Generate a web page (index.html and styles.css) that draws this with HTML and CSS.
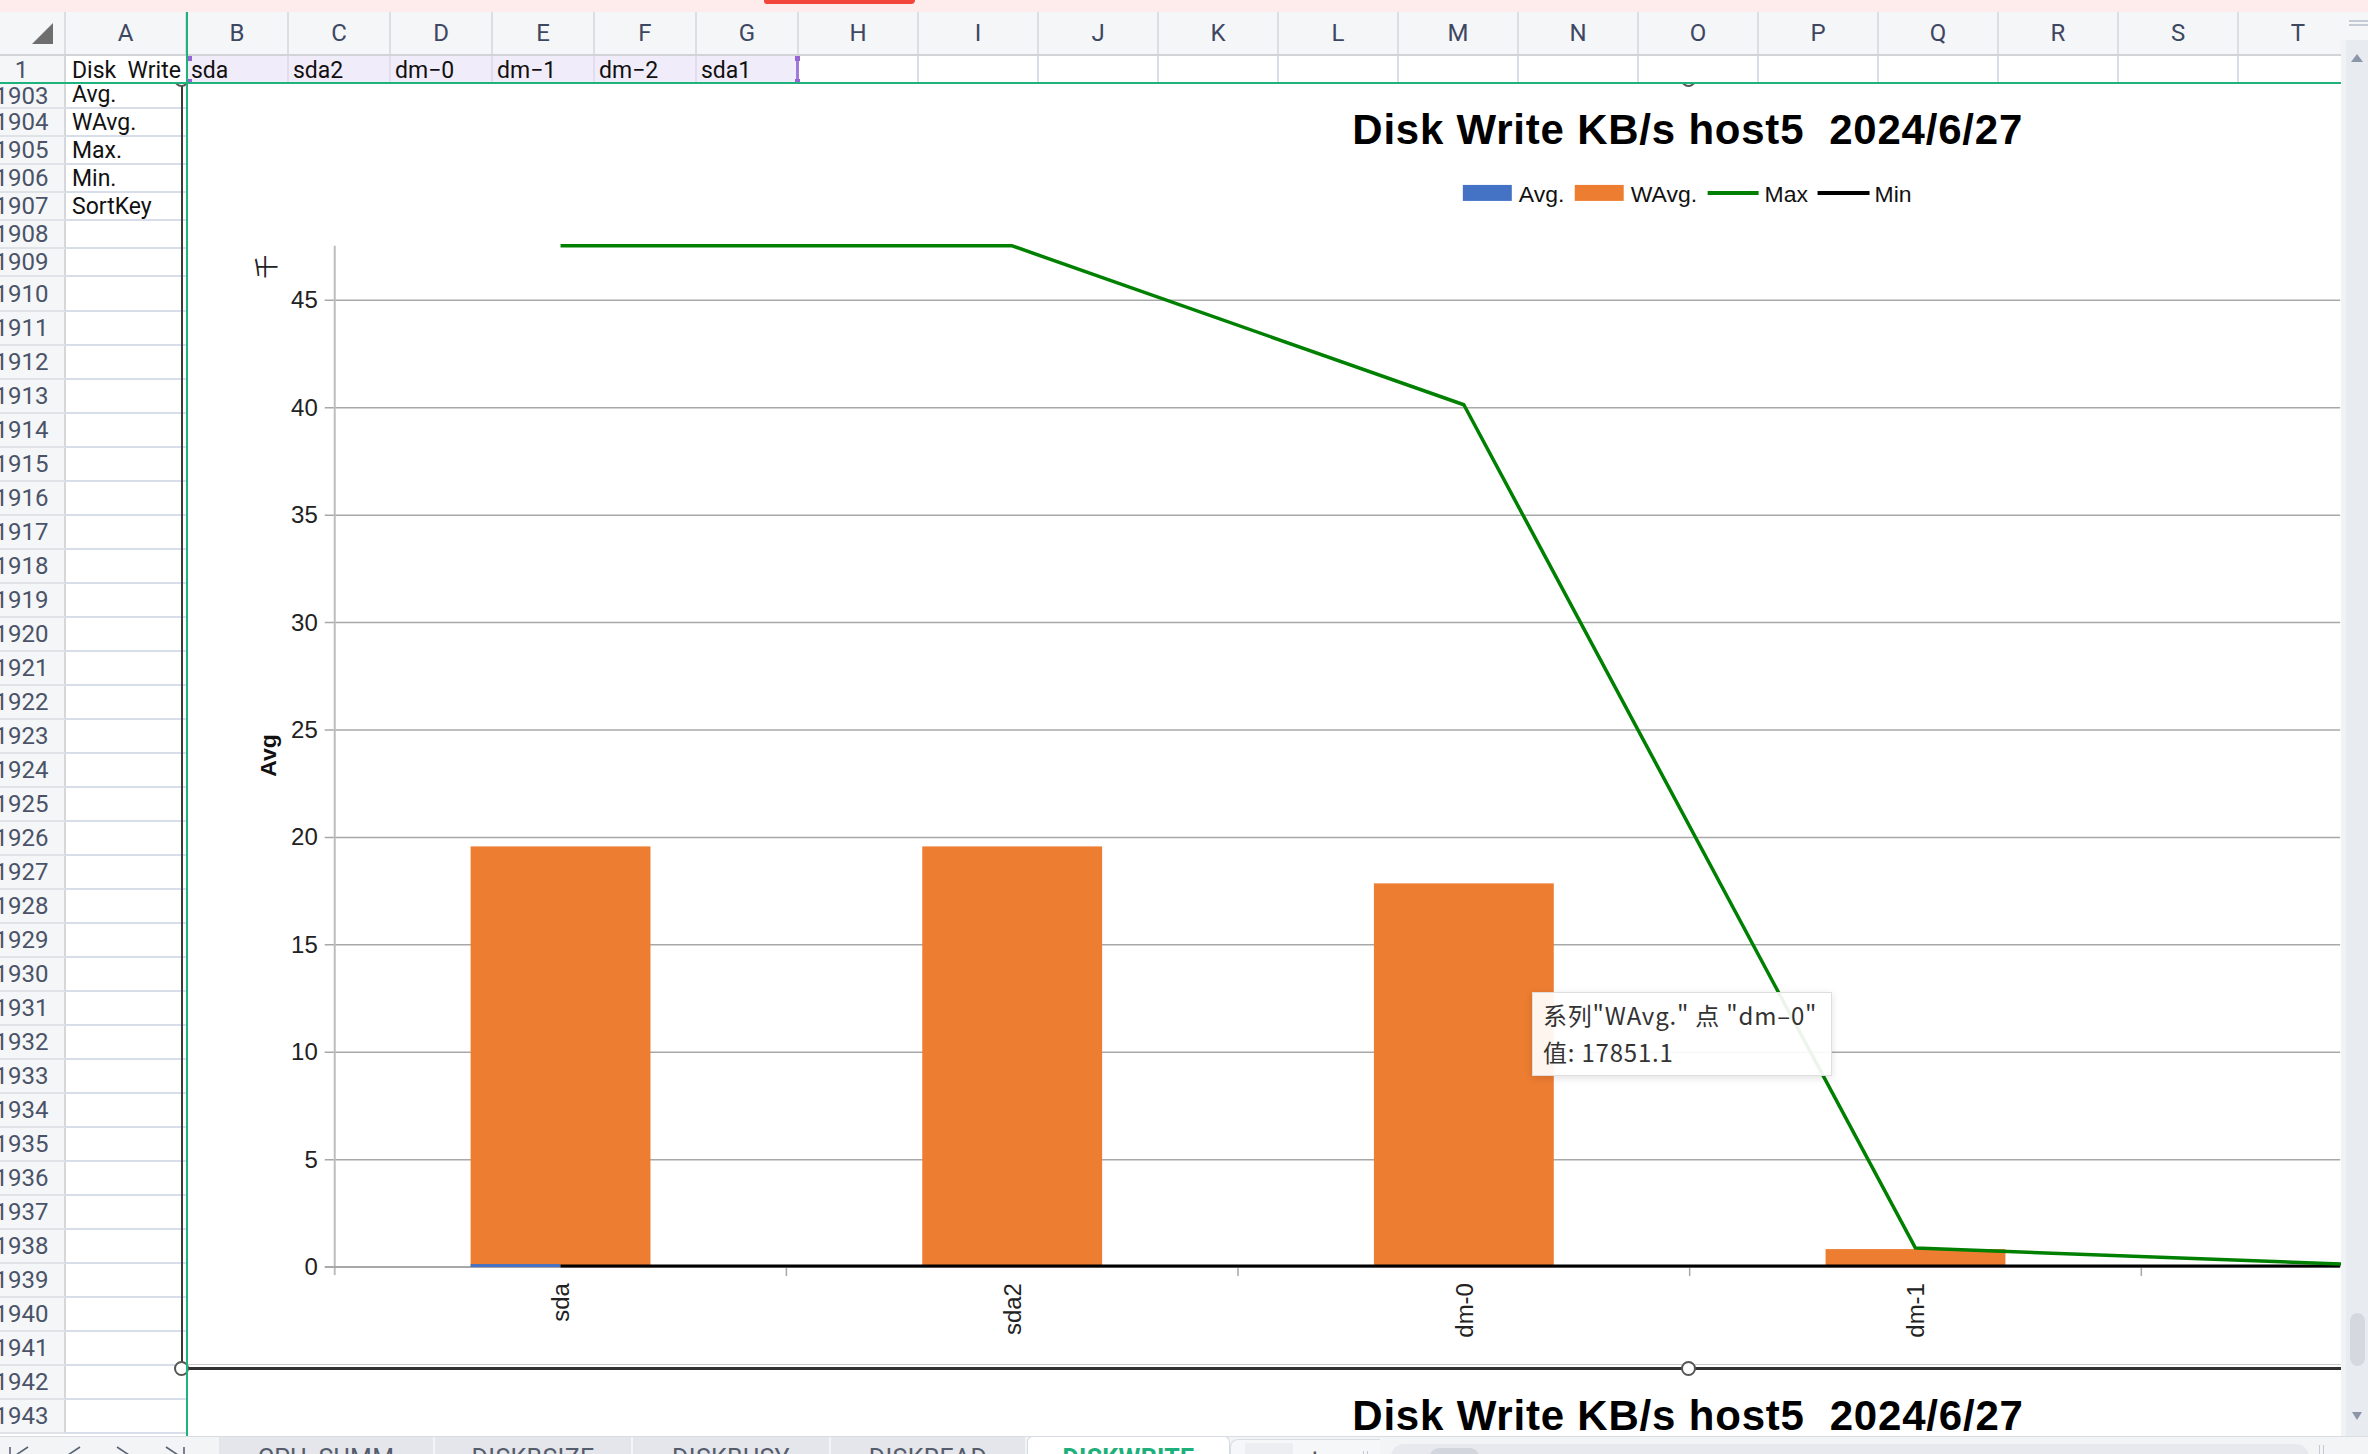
FILE: index.html
```html
<!DOCTYPE html>
<html lang="zh">
<head>
<meta charset="utf-8">
<title>DISKWRITE</title>
<link rel="stylesheet" href="styles.css">
</head>
<body>
<div class="app">
  <div class="topbar"><div class="mark"></div></div>
  <div class="main">
    <div class="sheet">
      <div class="cols">
        <div class="corner"><svg width="22" height="22" viewBox="0 0 22 22"><polygon points="21,0 21,21 0,21" fill="#6e6e6e"/></svg></div>
        <div>A</div><div>B</div><div>C</div><div>D</div><div>E</div><div>F</div><div>G</div>
        <div>H</div><div>I</div><div>J</div><div>K</div><div>L</div><div>M</div><div>N</div>
        <div>O</div><div>P</div><div>Q</div><div>R</div><div>S</div><div>T</div>
      </div>
      <div class="row1">
        <div class="rh1">1</div>
        <div class="c a1">Disk  Write</div>
        <div class="c sel sel-first">sda</div>
        <div class="c sel">sda2</div>
        <div class="c sel">dm−0</div>
        <div class="c sel">dm−1</div>
        <div class="c sel">dm−2</div>
        <div class="c sel sel-last">sda1</div>
        <div class="c"></div><div class="c"></div><div class="c"></div><div class="c"></div><div class="c"></div>
        <div class="c"></div><div class="c"></div><div class="c"></div><div class="c"></div><div class="c"></div>
        <div class="c"></div><div class="c"></div><div class="c"></div>
      </div>
      <div class="pane">
        <div class="left">
          <div class="lrow h25"><div class="rh"><span>1903</span></div><div class="ca">Avg.</div></div>
          <div class="lrow h28"><div class="rh"><span>1904</span></div><div class="ca">WAvg.</div></div>
          <div class="lrow h28"><div class="rh"><span>1905</span></div><div class="ca">Max.</div></div>
          <div class="lrow h28"><div class="rh"><span>1906</span></div><div class="ca">Min.</div></div>
          <div class="lrow h28"><div class="rh"><span>1907</span></div><div class="ca">SortKey</div></div>
          <div class="lrow h28"><div class="rh"><span>1908</span></div><div class="ca"></div></div>
          <div class="lrow h28"><div class="rh"><span>1909</span></div><div class="ca"></div></div>
          <div class="lrow h35"><div class="rh"><span>1910</span></div><div class="ca"></div></div>
          <div class="lrow"><div class="rh"><span>1911</span></div><div class="ca"></div></div>
          <div class="lrow"><div class="rh"><span>1912</span></div><div class="ca"></div></div>
          <div class="lrow"><div class="rh"><span>1913</span></div><div class="ca"></div></div>
          <div class="lrow"><div class="rh"><span>1914</span></div><div class="ca"></div></div>
          <div class="lrow"><div class="rh"><span>1915</span></div><div class="ca"></div></div>
          <div class="lrow"><div class="rh"><span>1916</span></div><div class="ca"></div></div>
          <div class="lrow"><div class="rh"><span>1917</span></div><div class="ca"></div></div>
          <div class="lrow"><div class="rh"><span>1918</span></div><div class="ca"></div></div>
          <div class="lrow"><div class="rh"><span>1919</span></div><div class="ca"></div></div>
          <div class="lrow"><div class="rh"><span>1920</span></div><div class="ca"></div></div>
          <div class="lrow"><div class="rh"><span>1921</span></div><div class="ca"></div></div>
          <div class="lrow"><div class="rh"><span>1922</span></div><div class="ca"></div></div>
          <div class="lrow"><div class="rh"><span>1923</span></div><div class="ca"></div></div>
          <div class="lrow"><div class="rh"><span>1924</span></div><div class="ca"></div></div>
          <div class="lrow"><div class="rh"><span>1925</span></div><div class="ca"></div></div>
          <div class="lrow"><div class="rh"><span>1926</span></div><div class="ca"></div></div>
          <div class="lrow"><div class="rh"><span>1927</span></div><div class="ca"></div></div>
          <div class="lrow"><div class="rh"><span>1928</span></div><div class="ca"></div></div>
          <div class="lrow"><div class="rh"><span>1929</span></div><div class="ca"></div></div>
          <div class="lrow"><div class="rh"><span>1930</span></div><div class="ca"></div></div>
          <div class="lrow"><div class="rh"><span>1931</span></div><div class="ca"></div></div>
          <div class="lrow"><div class="rh"><span>1932</span></div><div class="ca"></div></div>
          <div class="lrow"><div class="rh"><span>1933</span></div><div class="ca"></div></div>
          <div class="lrow"><div class="rh"><span>1934</span></div><div class="ca"></div></div>
          <div class="lrow"><div class="rh"><span>1935</span></div><div class="ca"></div></div>
          <div class="lrow"><div class="rh"><span>1936</span></div><div class="ca"></div></div>
          <div class="lrow"><div class="rh"><span>1937</span></div><div class="ca"></div></div>
          <div class="lrow"><div class="rh"><span>1938</span></div><div class="ca"></div></div>
          <div class="lrow"><div class="rh"><span>1939</span></div><div class="ca"></div></div>
          <div class="lrow"><div class="rh"><span>1940</span></div><div class="ca"></div></div>
          <div class="lrow"><div class="rh"><span>1941</span></div><div class="ca"></div></div>
          <div class="lrow"><div class="rh"><span>1942</span></div><div class="ca"></div></div>
          <div class="lrow"><div class="rh"><span>1943</span></div><div class="ca"></div></div>
        </div>
        <div class="charts">
          <svg class="chart1" width="2153" height="1285" viewBox="188 80 2153 1285">
            <text class="ct-title" x="1688" y="144" text-anchor="middle">Disk Write KB/s host5  2024/6/27</text>
            <rect x="1463" y="185" width="49" height="16" fill="#4472c4"/>
            <text class="ct-leg" x="1519" y="202">Avg.</text>
            <rect x="1575" y="185" width="49" height="16" fill="#ed7d31"/>
            <text class="ct-leg" x="1631" y="202">WAvg.</text>
            <line x1="1708" y1="193" x2="1759" y2="193" stroke="#008000" stroke-width="4"/>
            <text class="ct-leg" x="1765" y="202">Max</text>
            <line x1="1818" y1="193" x2="1870" y2="193" stroke="#000" stroke-width="4"/>
            <text class="ct-leg" x="1875" y="202">Min</text>

            <g stroke="#a8a8a8" stroke-width="1.5">
              <line x1="324" y1="1160.5" x2="2341" y2="1160.5"/>
              <line x1="324" y1="1053" x2="2341" y2="1053"/>
              <line x1="324" y1="945.5" x2="2341" y2="945.5"/>
              <line x1="324" y1="838" x2="2341" y2="838"/>
              <line x1="324" y1="730.5" x2="2341" y2="730.5"/>
              <line x1="324" y1="623" x2="2341" y2="623"/>
              <line x1="324" y1="515.5" x2="2341" y2="515.5"/>
              <line x1="324" y1="408" x2="2341" y2="408"/>
              <line x1="324" y1="300.5" x2="2341" y2="300.5"/>
            </g>
            <line x1="334" y1="246" x2="334" y2="1276" stroke="#bdbdbd" stroke-width="2"/>
            <line x1="324" y1="1268" x2="2341" y2="1268" stroke="#a8a8a8" stroke-width="2"/>
            <g stroke="#a8a8a8" stroke-width="1.5">
              <line x1="786" y1="1268" x2="786" y2="1277"/>
              <line x1="1238" y1="1268" x2="1238" y2="1277"/>
              <line x1="1690" y1="1268" x2="1690" y2="1277"/>
              <line x1="2142" y1="1268" x2="2142" y2="1277"/>
            </g>
            <g class="ct-axis" text-anchor="end">
              <text x="317" y="1276">0</text>
              <text x="317" y="1168.5">5</text>
              <text x="317" y="1061">10</text>
              <text x="317" y="953.5">15</text>
              <text x="317" y="846">20</text>
              <text x="317" y="738.5">25</text>
              <text x="317" y="631">30</text>
              <text x="317" y="523.5">35</text>
              <text x="317" y="416">40</text>
              <text x="317" y="308.5">45</text>
            </g>
            <text class="ct-unit" x="274" y="267" text-anchor="middle" transform="rotate(-90 274 267)">千</text>
            <text class="ct-ytitle" x="275" y="756" text-anchor="middle" transform="rotate(-90 275 756)">Avg</text>

            <rect x="470" y="847" width="180" height="421" fill="#ed7d31"/>
            <rect x="922" y="847" width="180" height="421" fill="#ed7d31"/>
            <rect x="1374" y="884" width="180" height="384" fill="#ed7d31"/>
            <rect x="1826" y="1250" width="180" height="18" fill="#ed7d31"/>
            <rect x="470" y="1265" width="90" height="3" fill="#4472c4"/>

            <line x1="560" y1="1267" x2="2341" y2="1267" stroke="#000" stroke-width="3"/>
            <polyline points="560,246 1012,246 1464,405 1916,1249 2368,1266" fill="none" stroke="#008000" stroke-width="3.5" stroke-linejoin="round"/>

            <g class="ct-axis" text-anchor="end">
              <text x="568" y="1284" transform="rotate(-90 568 1284)">sda</text>
              <text x="1021" y="1284" transform="rotate(-90 1021 1284)">sda2</text>
              <text x="1473" y="1284" transform="rotate(-90 1473 1284)">dm-0</text>
              <text x="1925" y="1284" transform="rotate(-90 1925 1284)">dm-1</text>
            </g>
          </svg>
          <svg class="chart2" width="2153" height="80" viewBox="188 1368 2153 80">
            <text class="ct-title" x="1688" y="1430" text-anchor="middle">Disk Write KB/s host5  2024/6/27</text>
          </svg>
        </div>

        <div class="frame">
          <span class="hd tl"></span><span class="hd tm"></span>
          <span class="hd bl"></span><span class="hd bm"></span>
        </div>

        <div class="tooltip"><div class="tt-line">系列"WAvg." 点 "dm–0"</div><div class="tt-line">值: 17851.1</div></div>
      </div>
    </div>
    <div class="scrollbar">
      <div class="sb-top">
        <svg width="19" height="6" viewBox="0 0 19 6"><line x1="0" y1="1" x2="19" y2="1" stroke="#b9c0cc" stroke-width="1.6"/><line x1="0" y1="5" x2="19" y2="5" stroke="#b9c0cc" stroke-width="1.6"/></svg>
      </div>
      <div class="sb-track">
        <svg class="sb-arrow" width="12" height="8" viewBox="0 0 12 8"><polygon points="6,0 12,8 0,8" fill="#8c96a9"/></svg>
        <div class="sb-space"></div>
        <div class="sb-thumb"></div>
        <svg class="sb-arrow" width="10" height="8" viewBox="0 0 10 8"><polygon points="0,0 10,0 5,8" fill="#8c96a9"/></svg>
      </div>
    </div>
  </div>
  <div class="hdivider"></div>
  <div class="vdivider"></div>
  <div class="tabbar">
    <div class="nav">
      <svg width="219" height="18" viewBox="0 0 219 18">
        <g stroke="#5a6275" stroke-width="1.6" fill="none">
          <line x1="10" y1="10" x2="10" y2="26"/>
          <polyline points="28,10 16,18 28,26"/>
          <polyline points="80,10 68,18 80,26"/>
          <polyline points="117,10 129,18 117,26"/>
          <polyline points="166,10 178,18 166,26"/>
          <line x1="184" y1="10" x2="184" y2="26"/>
        </g>
      </svg>
    </div>
    <div class="tab w214">CPU_SUMM</div>
    <div class="tab w198">DISKBSIZE</div>
    <div class="tab w198">DISKBUSY</div>
    <div class="tab w196">DISKREAD</div>
    <div class="tab active">DISKWRITE</div>
    <div class="tab-extra">
      <div class="tx-sq"></div>
      <div class="tx-plus">+</div>
      <div class="tx-bars"></div>
    </div>
    <div class="htrack"><div class="hthumb"></div></div>
    <div class="tx-bars end"></div>
  </div>
</div>
</body>
</html>
```

FILE: styles.css
```css
* { box-sizing: border-box; margin: 0; padding: 0; }
html, body { width: 2368px; height: 1454px; overflow: hidden; background: #fff; }
body { font-family: Roboto, "Noto Sans", sans-serif; color: #111; }

.app { position: relative; width: 2368px; height: 1454px; display: flex; flex-direction: column; }

.topbar { position: relative; height: 12px; flex: none; background: #fdeceb; }
.topbar .mark { position: absolute; left: 764px; top: 0; width: 151px; height: 4px; background: #f2453b; border-radius: 0 0 5px 3px; }

.main { display: flex; flex: 1; min-height: 0; }
.sheet { width: 2341px; flex: none; display: flex; flex-direction: column; overflow: hidden; }

.cols, .row1 {
  display: grid;
  grid-template-columns: 66px 121px repeat(6, 102px) repeat(13, 120px);
  flex: none;
}
.cols { height: 44px; background: #f5f6f8; border-bottom: 2px solid #d1d3d7; }
.cols > div {
  display: flex; align-items: center; justify-content: center;
  border-right: 2px solid #dcdee2;
  font-size: 24px; color: #3e4761;
}
.cols > .corner { justify-content: flex-end; padding-right: 10px; padding-top: 2px; }

.row1 { height: 28px; border-bottom: 2px solid #1fb27b; }
.rh1 {
  display: flex; align-items: center; justify-content: center; padding-right: 21px;
  background: #f5f6f8; border-right: 2px solid #d5d7db; font-size: 24px; color: #4a5367;
}
.row1 .c {
  display: flex; align-items: flex-end; padding: 0 0 2px 4px;
  border-right: 2px solid #d7deea; font-size: 23px; line-height: 22px; color: #111;
  white-space: pre; overflow: hidden; position: relative;
}
.row1 .a1 { border-right: none; padding-left: 6px; }
.row1 .sel { background: #f1ecf9; border-right-color: #e2dcef; }
.row1 .sel-last { border-right: 3px solid #a27ad8; overflow: visible; }
.sel-first::before, .sel-first::after, .sel-last::before, .sel-last::after {
  content: ""; position: absolute; width: 5px; height: 5px; background: #9665d3;
}
.sel-first::before { left: 0; top: 0; }
.sel-first::after { left: 0; bottom: 0; }
.sel-last::before { right: -4px; top: 0; }
.sel-last::after { right: -4px; bottom: 0; }

.pane { position: relative; flex: 1; min-height: 0; display: flex; overflow: hidden; }
.left { width: 188px; flex: none; display: flex; flex-direction: column; }
.lrow { display: flex; height: 34px; flex: none; }
.lrow.h25 { height: 25px; }
.lrow.h28 { height: 28px; }
.lrow.h35 { height: 35px; }
.rh {
  width: 66px; flex: none; display: flex; align-items: center; justify-content: center;
  padding-right: 21px; overflow: hidden;
  background: #f5f6f8; border-right: 2px solid #d5d7db; border-bottom: 2px solid #dfe2e7;
  font-size: 24px; color: #4a5367;
}
.rh span { flex: none; }
.ca {
  width: 120px; flex: none; display: flex; align-items: flex-end;
  padding: 0 0 1px 6px; border-bottom: 2px solid #d7deea;
  font-size: 23px; line-height: 22px; color: #111; overflow: hidden; white-space: nowrap;
}

.charts { flex: 1; display: flex; flex-direction: column; }
.chart1 { display: block; flex: none; margin-top: -4px; background: #fff; border-bottom: 1px solid #c9c9c9; }
.chart2 { display: block; flex: none; margin-top: 3px; background: #fff; }

.ct-title { font: 700 42px "Liberation Sans", Arial, sans-serif; fill: #000; white-space: pre; letter-spacing: 0.8px; }
.ct-leg { font: 23px "Liberation Sans", Arial, sans-serif; fill: #111; }
.ct-axis { font: 24px "Liberation Sans", Arial, sans-serif; fill: #222; }
.ct-ytitle { font: 700 23px "Liberation Sans", Arial, sans-serif; fill: #111; }
.ct-unit { font: 24px "Noto Sans CJK SC", "Noto Sans", sans-serif; fill: #222; }

.frame {
  position: absolute; left: 181px; top: -4px; width: 3200px; height: 1290px;
  border-left: 2px solid #3a3a3a; border-bottom: 3px solid #333;
  pointer-events: none;
}
.hd {
  position: absolute; width: 15px; height: 15px; border-radius: 50%;
  background: #fff; border: 2px solid #555;
}
.hd.tl { left: -9px; top: -8px; }
.hd.tm { left: 1498px; top: -8px; }
.hd.bl { left: -9px; bottom: -9px; }
.hd.bm { left: 1498px; bottom: -9px; }

.tooltip {
  position: absolute; left: 1532px; top: 908px;
  padding: 4px 14px 4px 10px;
  background: rgba(255, 255, 255, 0.92);
  border: 1px solid #dedede;
  box-shadow: 0 2px 8px rgba(0, 0, 0, 0.12);
  font-family: "Noto Sans CJK SC", "Noto Sans", sans-serif;
  font-size: 24px; line-height: 36px; color: #333; white-space: nowrap; letter-spacing: 0.8px;
}
.tt-line { height: 37px; }

.hdivider { position: absolute; left: 0; top: 82px; width: 2341px; height: 2px; background: #1fb27b; }
.vdivider { position: absolute; left: 186px; top: 12px; width: 2px; height: 1424px; background: #1fb27b; }

.scrollbar { width: 27px; flex: none; display: flex; flex-direction: column; }
.sb-top { height: 28px; flex: none; background: #f5f6f8; padding: 8px 0 0 8px; }
.sb-top svg { display: block; }
.sb-track {
  flex: 1; display: flex; flex-direction: column; align-items: center;
  padding: 14px 0 16px 0; background: #e8ebf0; border-left: 5px solid #f1f2f5;
}
.sb-arrow { display: block; flex: none; }
.sb-space { flex: 1; }
.sb-thumb { width: 15px; height: 53px; border-radius: 8px; background: #d5d9df; margin-bottom: 46px; flex: none; }

.tabbar {
  height: 18px; flex: none; display: flex; align-items: flex-start; overflow: hidden;
  background: #f3f4f6; border-top: 1px solid #d9dce2;
}
.nav { width: 219px; flex: none; }
.nav svg { display: block; }
.tab {
  height: 40px; flex: none; display: flex; justify-content: center;
  padding-top: 8px; margin-right: 2px;
  background: #e4e6eb; font-size: 25px; line-height: 28px; color: #555c6b; letter-spacing: 0.3px;
}
.tab.w214 { width: 214px; }
.tab.w198 { width: 196px; }
.tab.w196 { width: 194px; }
.tab.active {
  width: 203px; margin-right: 0; margin-top: -1px; background: #fff;
  border: 1px solid #d6dae1; border-bottom: none; border-radius: 6px 6px 0 0;
  color: #1db07a; font-weight: 700;
}
.tab-extra {
  width: 150px; height: 40px; flex: none; display: flex; align-items: flex-start;
  margin-top: 2px; padding: 3px 0 0 14px; background: #f6f7f9;
  border-left: 1px solid #d9dce2; border-top: 1px solid #d9dce2; border-radius: 8px 0 0 0;
}
.tx-sq { width: 48px; height: 30px; background: #eceef1; border-radius: 2px; flex: none; }
.tx-plus { width: 44px; text-align: center; font-size: 26px; line-height: 26px; color: #555; padding-top: 2px; flex: none; }
.tx-bars { width: 5px; height: 20px; margin: 8px 0 0 26px; border-left: 1px solid #c4c9d2; border-right: 1px solid #c4c9d2; flex: none; }
.htrack {
  width: 918px; height: 26px; flex: none; margin: 7px 0 0 11px; border-radius: 13px;
  background: #e7e9ee; padding: 4px 0 0 39px;
}
.hthumb { width: 49px; height: 20px; border-radius: 9px; background: #d3d6dc; }
.tx-bars.end { margin-left: 10px; }
```
